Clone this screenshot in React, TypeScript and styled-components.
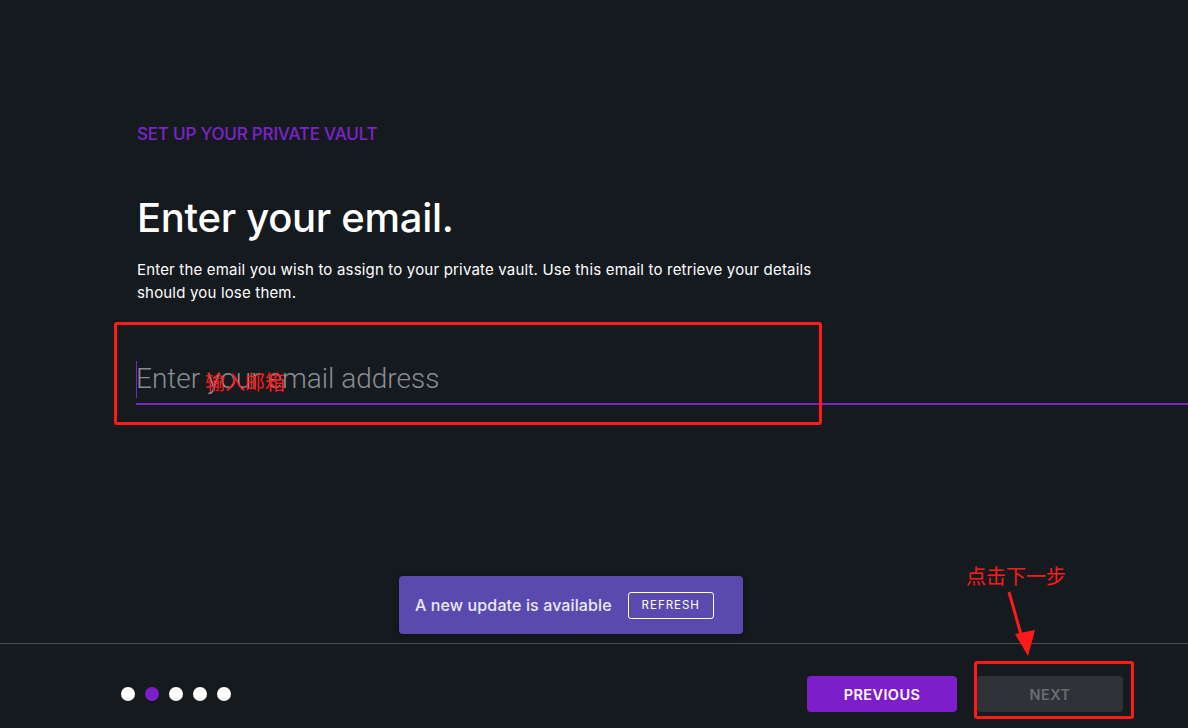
import React from "react";
import styled, { createGlobalStyle } from "styled-components";

const Global = createGlobalStyle`
  html, body { margin: 0; padding: 0; background: #151a1f; }
  body { font-family: "Inter", "Noto Sans", sans-serif; }
  * { box-sizing: border-box; }
`;

const Page = styled.div`
  position: relative;
  width: 1188px;
  height: 728px;
  display: flex;
  flex-direction: column;
  background: #151a1f;
  overflow: hidden;
`;

const Main = styled.main`
  flex: 1;
  display: flex;
  flex-direction: column;
  padding: 124px 0 0 136px;
`;

const Eyebrow = styled.div`
  font-size: 17px;
  line-height: 20px;
  color: #7f22cc;
  font-weight: 500;
  letter-spacing: -0.2px;
  margin-left: 1px;
`;

const Title = styled.h1`
  margin: 50px 0 0 1px;
  font-size: 40px;
  line-height: 48px;
  font-weight: 500;
  color: #ffffff;
  letter-spacing: -0.3px;
`;

const Lead = styled.p`
  margin: 16px 0 0 1px;
  font-size: 15px;
  line-height: 23px;
  color: #ffffff;
  letter-spacing: 0.18px;
  white-space: nowrap;
`;

const Field = styled.div`
  position: relative;
  margin-top: 49px;
  border-bottom: 2px solid #7f22cc;
  height: 52px;
  display: flex;
  align-items: flex-end;
`;

const Input = styled.input`
  width: 100%;
  background: transparent;
  border: none;
  outline: none;
  padding: 0 0 4px 0;
  font-family: "Roboto", sans-serif;
  font-weight: 300;
  font-size: 28px;
  line-height: 40px;
  color: #fff;
  &::placeholder { color: #8a8d92; }
`;

const Caret = styled.span`
  position: absolute;
  left: 0;
  top: 8px;
  width: 1px;
  height: 37px;
  background: #7f22cc;
`;

const Footer = styled.footer`
  height: 85px;
  border-top: 1px solid #4b4e53;
  display: flex;
  align-items: center;
  justify-content: space-between;
  padding: 0 65px 0 121px;
`;

const Dots = styled.div`
  display: flex;
  gap: 10px;
  margin-top: 16px;
`;

const Dot = styled.span<{ $active?: boolean }>`
  width: 14px;
  height: 14px;
  border-radius: 50%;
  background: ${(p) => (p.$active ? "#7b1fc8" : "#ffffff")};
`;

const Buttons = styled.div`
  display: flex;
  gap: 20px;
  margin-top: 16px;
`;

const Button = styled.button<{ $primary?: boolean }>`
  width: ${(p) => (p.$primary ? "150px" : "146px")};
  height: 36px;
  border: none;
  border-radius: 4px;
  font-family: "Inter", sans-serif;
  font-weight: 600;
  font-size: 14.5px;
  letter-spacing: 0.4px;
  background: ${(p) => (p.$primary ? "#7e1dca" : "#2f3237")};
  color: ${(p) => (p.$primary ? "#ffffff" : "#6a6d72")};
`;

const Toast = styled.div`
  position: absolute;
  left: 399px;
  top: 576px;
  width: 344px;
  height: 58px;
  border-radius: 4px;
  background: #5a4aaf;
  display: flex;
  align-items: center;
  padding: 0 16px;
  gap: 16px;
  box-shadow: 0 2px 6px rgba(0, 0, 0, 0.3);
`;

const ToastText = styled.span`
  font-size: 16px;
  color: #ece8f7;
  font-weight: 500;
  letter-spacing: 0.12px;
  white-space: nowrap;
`;

const ToastButton = styled.button`
  height: 27px;
  width: 86px;
  flex: none;
  background: transparent;
  border: 1px solid #ffffff;
  border-radius: 3px;
  color: #ffffff;
  font-family: "Inter", sans-serif;
  font-size: 11.5px;
  letter-spacing: 1px;
  padding: 0;
`;

const RedBox = styled.div`
  position: absolute;
  border: 3px solid #ff1a1a;
  border-radius: 3px;
`;

const RedNote = styled.span`
  position: absolute;
  color: #ff1a1a;
  font-family: "Noto Sans CJK SC", sans-serif;
  font-size: 20px;
  line-height: 24px;
  white-space: nowrap;
`;

const Arrow = styled.svg`
  position: absolute;
  left: 1000px;
  top: 588px;
`;

export default function App() {
  return (
    <Page>
      <Global />
      <Main>
        <Eyebrow>SET UP YOUR PRIVATE VAULT</Eyebrow>
        <Title>Enter your email.</Title>
        <Lead>
          Enter the email you wish to assign to your private vault. Use this email to retrieve your details
          <br />
          should you lose them.
        </Lead>
        <Field>
          <Caret />
          <Input placeholder="Enter your email address" />
        </Field>
      </Main>
      <Footer>
        <Dots>
          <Dot />
          <Dot $active />
          <Dot />
          <Dot />
          <Dot />
        </Dots>
        <Buttons>
          <Button $primary>PREVIOUS</Button>
          <Button>NEXT</Button>
        </Buttons>
      </Footer>
      <Toast>
        <ToastText>A new update is available</ToastText>
        <ToastButton>REFRESH</ToastButton>
      </Toast>
      <RedBox style={{ left: 114, top: 322, width: 708, height: 103 }} />
      <RedNote style={{ left: 205, top: 370 }}>输入邮箱</RedNote>
      <RedBox style={{ left: 974, top: 661, width: 160, height: 58 }} />
      <RedNote style={{ left: 966, top: 564 }}>点击下一步</RedNote>
      <Arrow width="40" height="72" viewBox="0 0 40 72">
        <path d="M9 4 L22 50" stroke="#ff1a1a" strokeWidth="3" fill="none" />
        <polygon points="15,46 35,42 28,68" fill="#ff1a1a" />
      </Arrow>
    </Page>
  );
}
